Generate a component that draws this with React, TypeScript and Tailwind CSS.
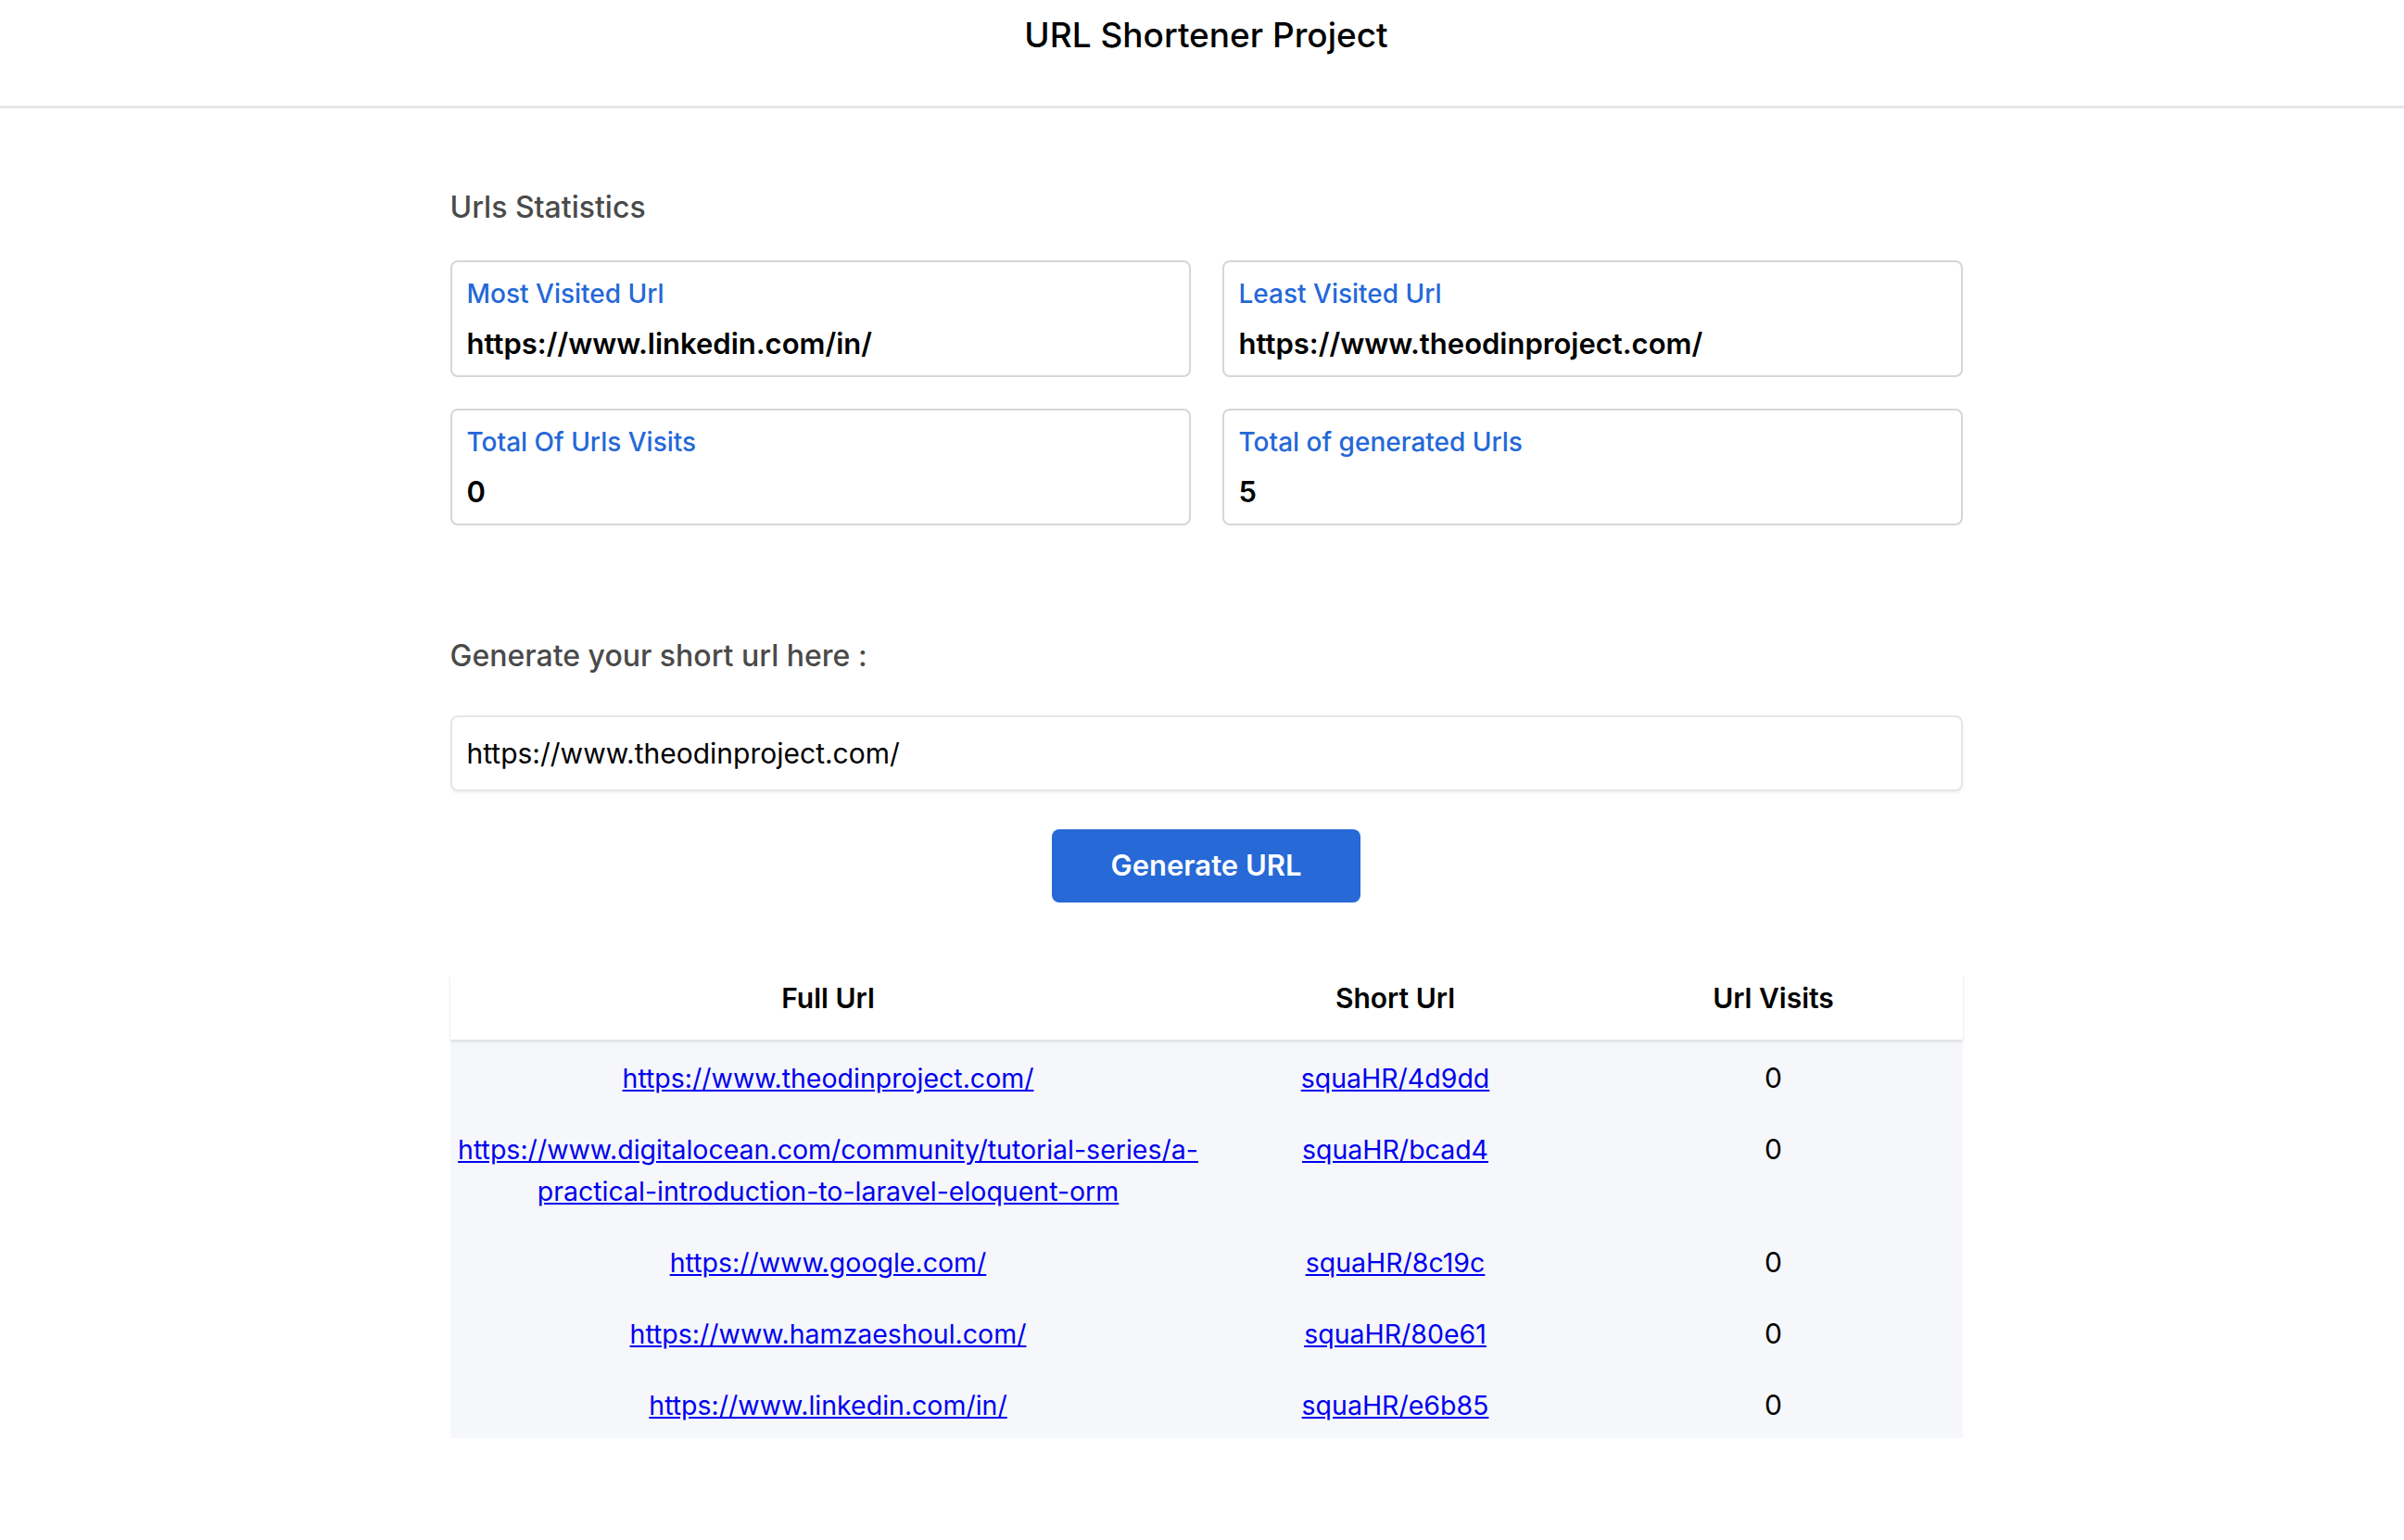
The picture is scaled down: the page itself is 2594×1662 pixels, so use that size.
const stats = [
  { label: 'Most Visited Url', value: 'https://www.linkedin.com/in/' },
  { label: 'Least Visited Url', value: 'https://www.theodinproject.com/' },
  { label: 'Total Of Urls Visits', value: '0' },
  { label: 'Total of generated Urls', value: '5' },
]

const urls = [
  { full: 'https://www.theodinproject.com/', short: 'squaHR/4d9dd', visits: 0 },
  {
    full: 'https://www.digitalocean.com/community/tutorial-series/a-practical-introduction-to-laravel-eloquent-orm',
    short: 'squaHR/bcad4',
    visits: 0,
  },
  { full: 'https://www.google.com/', short: 'squaHR/8c19c', visits: 0 },
  { full: 'https://www.hamzaeshoul.com/', short: 'squaHR/80e61', visits: 0 },
  { full: 'https://www.linkedin.com/in/', short: 'squaHR/e6b85', visits: 0 },
]

function StatCard({ label, value }: { label: string; value: string }) {
  return (
    <div className="flex flex-col h-[126px] px-[16px] pt-[13px] border-2 border-[#d6d6da] rounded-[8px] bg-white">
      <span className="text-[28px] leading-[42px] font-medium text-[#2468d8]">{label}</span>
      <span className="mt-[9px] text-[31px] leading-[48px] font-semibold text-black">{value}</span>
    </div>
  )
}

export default function App() {
  return (
    <div className="min-h-screen bg-white font-['Inter',sans-serif] text-black">
      <header className="h-[117px] border-b-[3px] border-[#e6e7ea] pl-[9px] pt-[10px] text-center">
        <h1 className="text-[37px] leading-[56px] font-medium">URL Shortener Project</h1>
      </header>

      <main className="pl-[9px] pb-[100px]">
        <div className="w-[1632px] mx-auto">
          <h2 className="mt-[84px] text-[32px] leading-[46px] font-medium text-[#4a4a4a]">Urls Statistics</h2>

          <div className="mt-[34px] grid grid-cols-2 gap-[34px]">
            {stats.map((s) => (
              <StatCard key={s.label} label={s.label} value={s.value} />
            ))}
          </div>

          <h2 className="mt-[118px] text-[32px] leading-[46px] font-medium text-[#4a4a4a]">
            Generate your short url here :
          </h2>

          <input
            className="mt-[41px] block w-full h-[82px] px-[16px] border-2 border-[#e6e6e6] rounded-[8px] shadow-[0_2px_3px_rgba(0,0,0,0.06)] text-[30px] text-black outline-none"
            defaultValue="https://www.theodinproject.com/"
          />

          <div className="mt-[41px] flex justify-center">
            <button className="w-[333px] h-[79px] rounded-[8px] bg-[#2669d7] text-white text-[31px] font-semibold">
              Generate URL
            </button>
          </div>

          <div className="mt-[78px]">
            <div className="grid grid-cols-[2fr_1fr_1fr] bg-white h-[70px] pt-[3px] text-[30px] leading-[45px] font-semibold text-center shadow-[0_2px_3px_rgba(0,0,0,0.12)] relative">
              <div>Full Url</div>
              <div>Short Url</div>
              <div>Url Visits</div>
            </div>
            <div className="bg-[#f5f7fb]">
              {urls.map((u) => (
                <div key={u.short} className="grid grid-cols-[2fr_1fr_1fr] text-[28.5px] leading-[45px] text-center">
                  <div className="px-[4px] pt-[19px] pb-[13px]">
                    <a href="#" className="text-[#0000ee] underline">
                      {u.full}
                    </a>
                  </div>
                  <div className="px-[4px] pt-[19px] pb-[13px]">
                    <a href="#" className="text-[#0000ee] underline">
                      {u.short}
                    </a>
                  </div>
                  <div className="px-[4px] pt-[19px] pb-[13px] text-[30px]">{u.visits}</div>
                </div>
              ))}
            </div>
          </div>
        </div>
      </main>
    </div>
  )
}
